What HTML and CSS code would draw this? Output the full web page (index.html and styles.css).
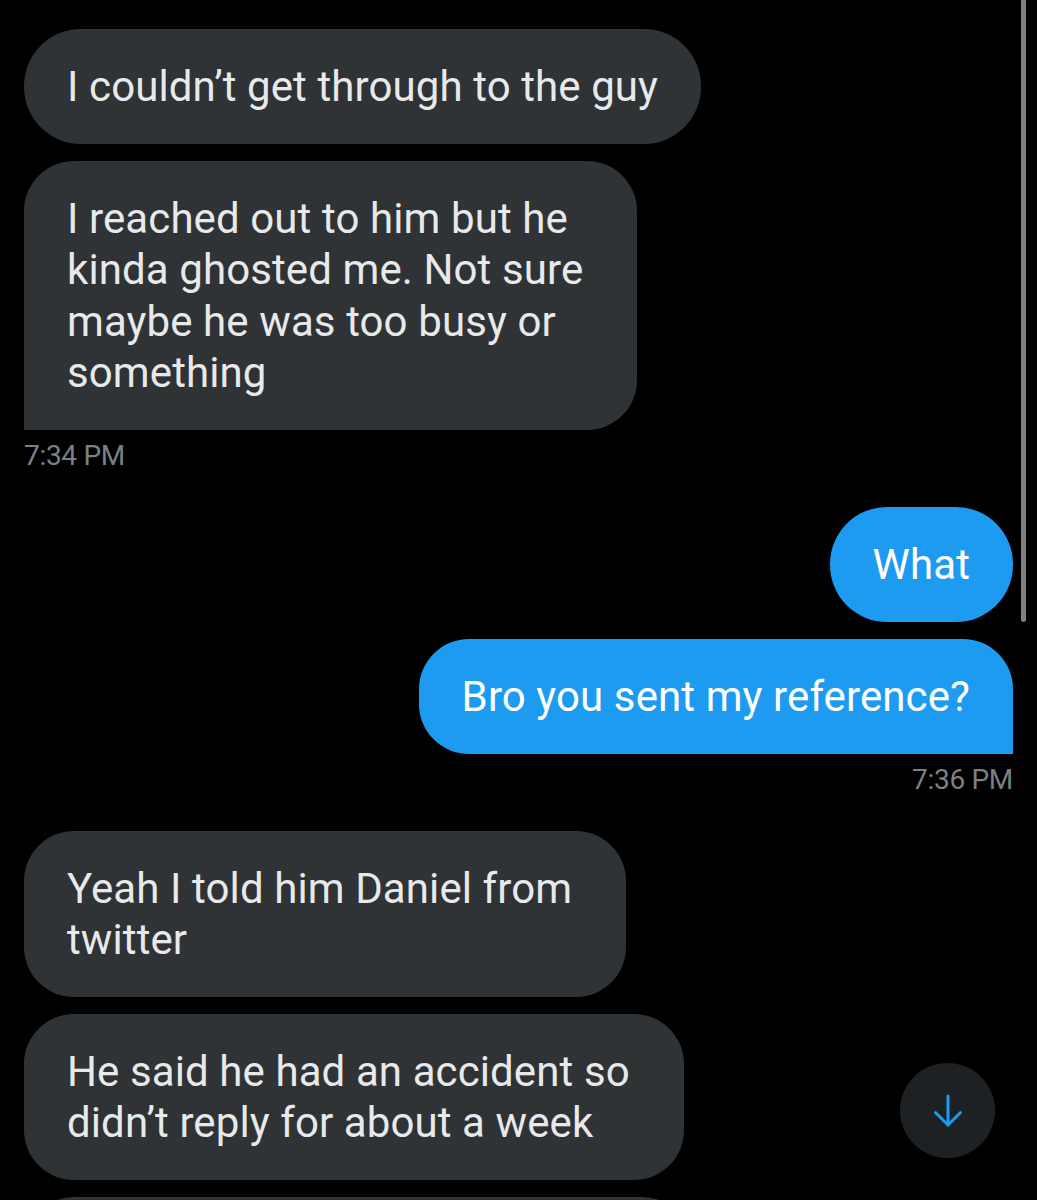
FILE: index.html
```html
<!DOCTYPE html>
<html lang="en">
<head>
    <meta charset="UTF-8">
    <meta name="viewport" content="width=device-width, initial-scale=1.0">
    <title>Messages</title>
    <link rel="stylesheet" href="styles.css">
</head>
<body>
    <div class="thread">
        <!-- received group -->
        <div class="group">
            <div class="bubble in">I couldn’t get through to the guy</div>
            <div class="bubble in wrap last">I reached out to him but he<br>kinda ghosted me. Not sure<br>maybe he was too busy or<br>something</div>
            <div class="time">7:34 PM</div>
        </div>

        <!-- sent group -->
        <div class="group out-group">
            <div class="bubble out">What</div>
            <div class="bubble out last">Bro you sent my reference?</div>
            <div class="time">7:36 PM</div>
        </div>

        <div class="group">
            <div class="bubble in wrap">Yeah I told him Daniel from<br>twitter</div>
            <div class="bubble in wrap">He said he had an accident so<br>didn’t reply for about a week</div>
            <div class="bubble in wrap peek">&nbsp;<br>&nbsp;</div>
        </div>
    </div>

    <div class="scrollbar"></div>

    <button class="jump" aria-label="Scroll to bottom">
        <svg width="32" height="36" viewBox="0 0 32 36" fill="none" stroke="#1d9bf0" stroke-width="3" stroke-linecap="round" stroke-linejoin="round">
            <path d="M16 3 V32"/>
            <path d="M3.5 19.5 L16 32 L28.5 19.5"/>
        </svg>
    </button>
</body>
</html>
```

FILE: styles.css
```css
body {
    margin: 0;
    padding: 0;
    background-color: #000;
    font-family: 'Roboto', 'Liberation Sans', sans-serif;
    color: #e7e9ea;
    overflow: hidden;
    height: 1200px;
}

.thread {
    padding: 29px 24px 0;
    display: flex;
    flex-direction: column;
    gap: 36px;
}

.group {
    display: flex;
    flex-direction: column;
    align-items: flex-start;
    gap: 17px;
}

.out-group {
    align-items: flex-end;
}

.bubble {
    font-size: 42px;
    line-height: 51.5px;
    letter-spacing: 0.1px;
    padding: 31.5px 43px;
    border-radius: 57px;
    box-sizing: border-box;
    min-height: 115px;
}

.bubble.wrap {
    border-radius: 50px;
    padding-right: 54px;
}

.bubble.peek {
    width: 668px;
}

.in {
    background-color: #2f3336;
    color: #e7e9ea;
}

.in.last {
    border-bottom-left-radius: 0;
}

.out {
    background-color: #1d9bf0;
    color: #fff;
}

.out.last {
    border-radius: 50px;
    border-bottom-right-radius: 0;
}

.time {
    font-size: 28px;
    line-height: 30px;
    color: #7c8085;
    margin-top: -6px;
    letter-spacing: -0.3px;
}

.scrollbar {
    position: fixed;
    top: 0;
    left: 1021px;
    width: 5px;
    height: 622px;
    background-color: #808080;
    border-radius: 0 0 3px 3px;
}

.jump {
    position: fixed;
    left: 900px;
    top: 1063px;
    width: 95px;
    height: 95px;
    border-radius: 50%;
    border: none;
    background-color: #1e2124;
    display: flex;
    align-items: center;
    justify-content: center;
    padding: 0;
}
```
